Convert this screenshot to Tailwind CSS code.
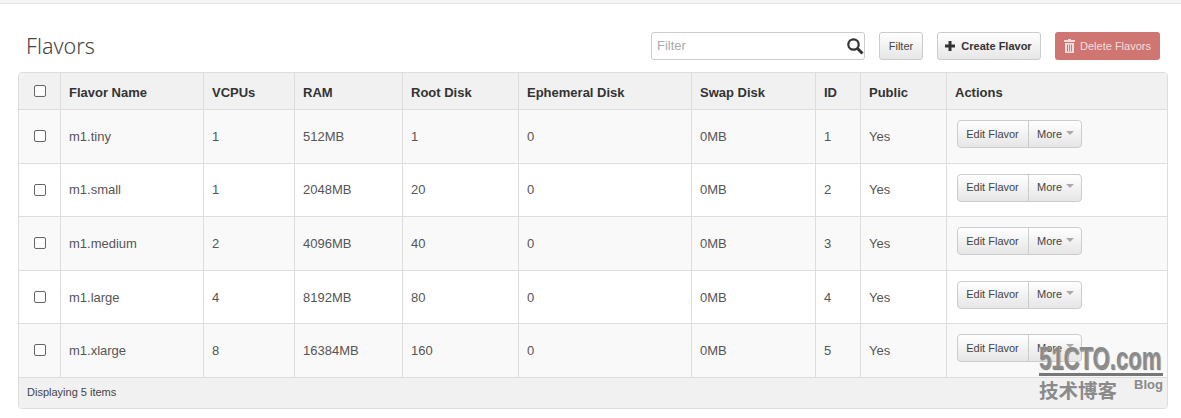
<!DOCTYPE html>
<html>

<head>
    <meta charset="utf-8" />
    <meta name="viewport" content="width=device-width,initial-scale=1" />
    <title>Flavors</title>
    <script src="https://cdn.jsdelivr.net/npm/@tailwindcss/browser@4"></script>
</head>

<body class="bg-white font-['Liberation_Sans',sans-serif] text-[13px] text-[#555] w-[1181px] h-[418px] overflow-hidden relative">
    <div class="h-[4px] bg-[#f5f5f5] border-b border-[#e3e3e3]"></div>

    <div class="flex items-center h-[68px] pl-[26px] pr-[21px] pt-[28px] pb-[12px]">
        <h1 class="font-['Noto_Sans',sans-serif] text-[21.5px] font-light text-[#444] leading-none">Flavors</h1>
        <div class="ml-auto flex items-center">
            <div class="relative w-[214px] h-[28px] border border-[#ccc] rounded-[3px] bg-white flex items-center pl-[5px] text-[#aaa]">
                Filter
                <svg class="absolute right-0 top-[4px]" width="18" height="18" viewBox="0 0 18 18" fill="none">
                    <circle cx="7.5" cy="7.5" r="5.2" stroke="#333" stroke-width="2.2" />
                    <path d="M11.5 11.5L16.5 16.5" stroke="#333" stroke-width="3" />
                </svg>
            </div>
            <button class="ml-[14px] w-[44px] h-[28px] border border-[#ccc] rounded-[3px] bg-gradient-to-b from-white to-[#e6e6e6] text-[11px] text-[#444]">Filter</button>
            <button class="ml-[14px] w-[104px] h-[28px] border border-[#ccc] rounded-[3px] bg-gradient-to-b from-white to-[#e6e6e6] text-[11px] font-bold text-[#333] flex items-center justify-center gap-[5px] pr-[2px]">
                <svg width="12" height="12" viewBox="0 0 12 12"><path d="M4.5 1h3v3.5H11v3H7.5V11h-3V7.5H1v-3h3.5z" fill="#333" /></svg>
                Create Flavor
            </button>
            <button class="ml-[14px] w-[105px] h-[28px] rounded-[3px] bg-[#cf7673] text-[11px] text-[#f3dedd] flex items-center justify-center gap-[5px]">
                <svg width="11" height="14" viewBox="0 0 11 14" fill="#f3dedd"><path d="M4 0h3v1h4v2H0V1h4zM1 4h9v10H1zM3 5.5v7h1v-7zM5 5.5v7h1v-7zM7 5.5v7h1v-7z" fill-rule="evenodd" /></svg>
                Delete Flavors
            </button>
        </div>
    </div>

    <div class="mx-[18px] w-[1150px] border border-[#ddd] rounded-[4px] overflow-hidden">
        <table class="w-full table-fixed border-collapse">
            <colgroup>
                <col class="w-[41px]" /><col class="w-[143px]" /><col class="w-[91px]" /><col class="w-[108px]" /><col class="w-[116px]" /><col class="w-[173px]" /><col class="w-[124px]" /><col class="w-[45px]" /><col class="w-[86px]" /><col />
            </colgroup>
            <thead class="bg-[#f1f1f1] text-[#333] font-bold text-left">
                <tr class="h-[36px] border-b border-[#ddd]">
                    <th class="pl-[1px]"><span class="block mx-auto w-[12px] h-[12px] border border-[#666] rounded-[2px] bg-white"></span></th>
                    <th class="pl-[8.5px] pt-[3px] border-l border-[#ddd]">Flavor Name</th>
                    <th class="pl-[8.5px] pt-[3px] border-l border-[#ddd]">VCPUs</th>
                    <th class="pl-[8.5px] pt-[3px] border-l border-[#ddd]">RAM</th>
                    <th class="pl-[8.5px] pt-[3px] border-l border-[#ddd]">Root Disk</th>
                    <th class="pl-[8.5px] pt-[3px] border-l border-[#ddd]">Ephemeral Disk</th>
                    <th class="pl-[8.5px] pt-[3px] border-l border-[#ddd]">Swap Disk</th>
                    <th class="pl-[8.5px] pt-[3px] border-l border-[#ddd]">ID</th>
                    <th class="pl-[8.5px] pt-[3px] border-l border-[#ddd]">Public</th>
                    <th class="pl-[8.5px] pt-[3px] border-l border-[#ddd]">Actions</th>
                </tr>
            </thead>
            <tbody>
                <tr class="h-[54px] bg-[#f9f9f9] border-b border-[#ddd]">
                    <td class="pl-[1px] pb-[1px]"><span class="block mx-auto w-[12px] h-[12px] border border-[#666] rounded-[2px] bg-white"></span></td>
                    <td class="pl-[8.5px] pt-[2px] border-l border-[#ddd]">m1.tiny</td>
                    <td class="pl-[8.5px] pt-[2px] border-l border-[#ddd]">1</td>
                    <td class="pl-[8.5px] pt-[2px] border-l border-[#ddd]">512MB</td>
                    <td class="pl-[8.5px] pt-[2px] border-l border-[#ddd]">1</td>
                    <td class="pl-[8.5px] pt-[2px] border-l border-[#ddd]">0</td>
                    <td class="pl-[8.5px] pt-[2px] border-l border-[#ddd]">0MB</td>
                    <td class="pl-[8.5px] pt-[2px] border-l border-[#ddd]">1</td>
                    <td class="pl-[8.5px] pt-[2px] border-l border-[#ddd]">Yes</td>
                    <td class="pl-[10px] pb-[4px] border-l border-[#ddd]">
                        <div class="flex w-[125px] h-[28px] border border-[#ccc] rounded-[4px] bg-gradient-to-b from-white to-[#e6e6e6] text-[11px] text-[#444] items-center">
                            <span class="w-[71px] h-full flex items-center justify-center border-r border-[#ccc]">Edit Flavor</span>
                            <span class="pl-[8.5px]">More</span>
                            <span class="ml-[4px] mb-[3px] border-x-[4px] border-x-transparent border-t-[4px] border-t-[#aaa]"></span>
                        </div>
                    </td>
                </tr>
                <tr class="h-[53px] bg-white border-b border-[#ddd]">
                    <td class="pl-[1px]"><span class="block mx-auto w-[12px] h-[12px] border border-[#666] rounded-[2px] bg-white"></span></td>
                    <td class="pl-[8.5px] pt-[1px] border-l border-[#ddd]">m1.small</td>
                    <td class="pl-[8.5px] pt-[1px] border-l border-[#ddd]">1</td>
                    <td class="pl-[8.5px] pt-[1px] border-l border-[#ddd]">2048MB</td>
                    <td class="pl-[8.5px] pt-[1px] border-l border-[#ddd]">20</td>
                    <td class="pl-[8.5px] pt-[1px] border-l border-[#ddd]">0</td>
                    <td class="pl-[8.5px] pt-[1px] border-l border-[#ddd]">0MB</td>
                    <td class="pl-[8.5px] pt-[1px] border-l border-[#ddd]">2</td>
                    <td class="pl-[8.5px] pt-[1px] border-l border-[#ddd]">Yes</td>
                    <td class="pl-[10px] pb-[4px] border-l border-[#ddd]">
                        <div class="flex w-[125px] h-[28px] border border-[#ccc] rounded-[4px] bg-gradient-to-b from-white to-[#e6e6e6] text-[11px] text-[#444] items-center">
                            <span class="w-[71px] h-full flex items-center justify-center border-r border-[#ccc]">Edit Flavor</span>
                            <span class="pl-[8.5px]">More</span>
                            <span class="ml-[4px] mb-[3px] border-x-[4px] border-x-transparent border-t-[4px] border-t-[#aaa]"></span>
                        </div>
                    </td>
                </tr>
                <tr class="h-[54px] bg-[#f9f9f9] border-b border-[#ddd]">
                    <td class="pl-[1px] pb-[1px]"><span class="block mx-auto w-[12px] h-[12px] border border-[#666] rounded-[2px] bg-white"></span></td>
                    <td class="pl-[8.5px] pt-[2px] border-l border-[#ddd]">m1.medium</td>
                    <td class="pl-[8.5px] pt-[2px] border-l border-[#ddd]">2</td>
                    <td class="pl-[8.5px] pt-[2px] border-l border-[#ddd]">4096MB</td>
                    <td class="pl-[8.5px] pt-[2px] border-l border-[#ddd]">40</td>
                    <td class="pl-[8.5px] pt-[2px] border-l border-[#ddd]">0</td>
                    <td class="pl-[8.5px] pt-[2px] border-l border-[#ddd]">0MB</td>
                    <td class="pl-[8.5px] pt-[2px] border-l border-[#ddd]">3</td>
                    <td class="pl-[8.5px] pt-[2px] border-l border-[#ddd]">Yes</td>
                    <td class="pl-[10px] pb-[4px] border-l border-[#ddd]">
                        <div class="flex w-[125px] h-[28px] border border-[#ccc] rounded-[4px] bg-gradient-to-b from-white to-[#e6e6e6] text-[11px] text-[#444] items-center">
                            <span class="w-[71px] h-full flex items-center justify-center border-r border-[#ccc]">Edit Flavor</span>
                            <span class="pl-[8.5px]">More</span>
                            <span class="ml-[4px] mb-[3px] border-x-[4px] border-x-transparent border-t-[4px] border-t-[#aaa]"></span>
                        </div>
                    </td>
                </tr>
                <tr class="h-[53px] bg-white border-b border-[#ddd]">
                    <td class="pl-[1px]"><span class="block mx-auto w-[12px] h-[12px] border border-[#666] rounded-[2px] bg-white"></span></td>
                    <td class="pl-[8.5px] pt-[2px] border-l border-[#ddd]">m1.large</td>
                    <td class="pl-[8.5px] pt-[2px] border-l border-[#ddd]">4</td>
                    <td class="pl-[8.5px] pt-[2px] border-l border-[#ddd]">8192MB</td>
                    <td class="pl-[8.5px] pt-[2px] border-l border-[#ddd]">80</td>
                    <td class="pl-[8.5px] pt-[2px] border-l border-[#ddd]">0</td>
                    <td class="pl-[8.5px] pt-[2px] border-l border-[#ddd]">0MB</td>
                    <td class="pl-[8.5px] pt-[2px] border-l border-[#ddd]">4</td>
                    <td class="pl-[8.5px] pt-[2px] border-l border-[#ddd]">Yes</td>
                    <td class="pl-[10px] pb-[4px] border-l border-[#ddd]">
                        <div class="flex w-[125px] h-[28px] border border-[#ccc] rounded-[4px] bg-gradient-to-b from-white to-[#e6e6e6] text-[11px] text-[#444] items-center">
                            <span class="w-[71px] h-full flex items-center justify-center border-r border-[#ccc]">Edit Flavor</span>
                            <span class="pl-[8.5px]">More</span>
                            <span class="ml-[4px] mb-[3px] border-x-[4px] border-x-transparent border-t-[4px] border-t-[#aaa]"></span>
                        </div>
                    </td>
                </tr>
                <tr class="h-[54px] bg-[#f9f9f9]">
                    <td class="pl-[1px] pb-[1px]"><span class="block mx-auto w-[12px] h-[12px] border border-[#666] rounded-[2px] bg-white"></span></td>
                    <td class="pl-[8.5px] pt-[1px] border-l border-[#ddd]">m1.xlarge</td>
                    <td class="pl-[8.5px] pt-[1px] border-l border-[#ddd]">8</td>
                    <td class="pl-[8.5px] pt-[1px] border-l border-[#ddd]">16384MB</td>
                    <td class="pl-[8.5px] pt-[1px] border-l border-[#ddd]">160</td>
                    <td class="pl-[8.5px] pt-[1px] border-l border-[#ddd]">0</td>
                    <td class="pl-[8.5px] pt-[1px] border-l border-[#ddd]">0MB</td>
                    <td class="pl-[8.5px] pt-[1px] border-l border-[#ddd]">5</td>
                    <td class="pl-[8.5px] pt-[1px] border-l border-[#ddd]">Yes</td>
                    <td class="pl-[10px] pb-[5px] border-l border-[#ddd]">
                        <div class="flex w-[125px] h-[28px] border border-[#ccc] rounded-[4px] bg-gradient-to-b from-white to-[#e6e6e6] text-[11px] text-[#444] items-center">
                            <span class="w-[71px] h-full flex items-center justify-center border-r border-[#ccc]">Edit Flavor</span>
                            <span class="pl-[8.5px]">More</span>
                            <span class="ml-[4px] mb-[3px] border-x-[4px] border-x-transparent border-t-[4px] border-t-[#aaa]"></span>
                        </div>
                    </td>
                </tr>
            </tbody>
        </table>
        <div class="h-[31px] pb-[2px] bg-[#f1f1f1] border-t border-[#ddd] flex items-center pl-[8px] text-[11px] text-[#444]">Displaying 5 items</div>
    </div>

    <!-- watermark over the last row -->
    <div class="absolute left-[1039px] top-[344px] w-[124px] text-[#8a8a8a]">
        <div class="h-[32px] border-b-[3px] border-[#777] whitespace-nowrap">
            <span class="block font-bold text-[32px] leading-[29px] scale-x-[0.69] origin-left [text-shadow:0_0_2px_#fff,1px_1px_1px_#555]">51CTO.com</span>
        </div>
        <div class="flex items-start mt-[2px]">
            <span class="font-['Noto_Sans_CJK_SC',sans-serif] text-[19.5px] leading-[24px] font-bold">技术博客</span>
            <span class="ml-auto font-bold text-[13px] leading-[14px]">Blog</span>
        </div>
    </div>
</body>

</html>
